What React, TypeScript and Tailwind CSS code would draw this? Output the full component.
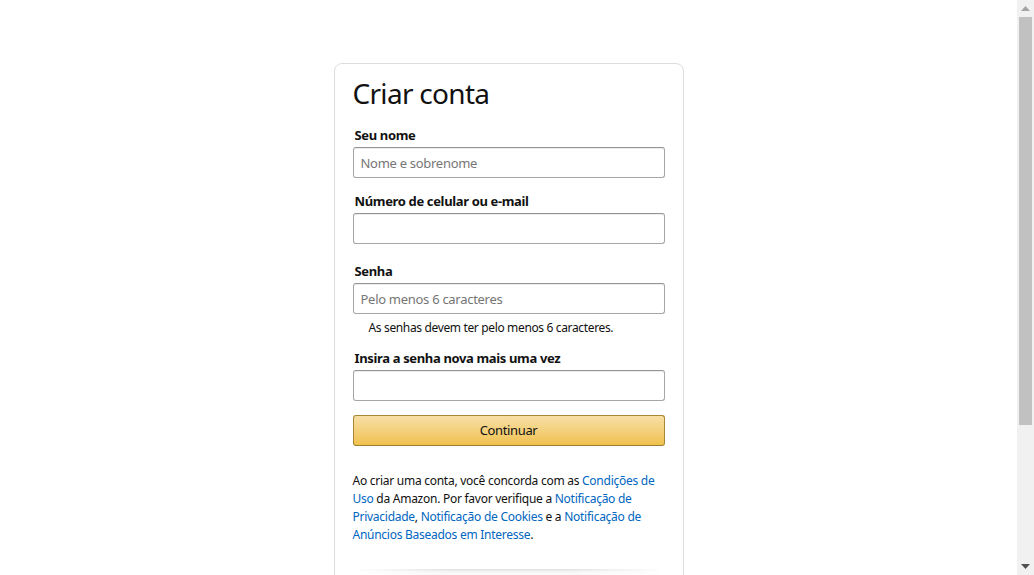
const font = "font-['Noto_Sans',_'Open_Sans',_sans-serif] tracking-[-0.022em]";

const Field = ({
  label,
  placeholder,
  className,
}: {
  label: string;
  placeholder?: string;
  className?: string;
}) => (
  <div className={className}>
    <label className="block pl-[2px] pb-[2px] text-[13px] leading-[19px] font-bold text-[#111]">
      {label}
    </label>
    <input
      type="text"
      placeholder={placeholder}
      className="block h-[31px] w-full rounded-[3px] border border-[#a6a6a6] border-t-[#949494] bg-white px-[7px] text-[13px] tracking-[-0.022em] text-[#111] shadow-[inset_0_1px_0_rgba(0,0,0,0.07)] outline-none placeholder:text-[#767676]"
    />
  </div>
);

const Scrollbar = () => (
  <div className="flex h-full w-[17px] shrink-0 flex-col items-center bg-[#f1f1f1]">
    <div className="flex h-[17px] w-full items-center justify-center">
      <svg width="9" height="5" viewBox="0 0 9 5">
        <path d="M0 5 L4.5 0 L9 5 Z" fill="#a3a3a3" />
      </svg>
    </div>
    <div className="h-[408px] w-[13px] bg-[#c1c1c1]" />
    <div className="flex-1" />
    <div className="flex h-[17px] w-full items-center justify-center">
      <svg width="9" height="5" viewBox="0 0 9 5">
        <path d="M0 0 L9 0 L4.5 5 Z" fill="#505050" />
      </svg>
    </div>
  </div>
);

export default function App() {
  return (
    <div className={`${font} flex h-screen overflow-hidden bg-white text-[#111]`}>
      <div className="min-w-0 flex-1 overflow-hidden">
        <div className="flex justify-center pt-[63px]">
          <div className="w-[350px] rounded-[8px] border border-[#ddd] px-[18px] pt-[12px] pb-[26px]">
            <h1 className="text-[28px] leading-[34px] font-normal tracking-[-0.025em] text-[#111]">
              Criar conta
            </h1>

            <Field className="mt-[16px]" label="Seu nome" placeholder="Nome e sobrenome" />
            <Field className="mt-[14px]" label="Número de celular ou e-mail" />
            <Field className="mt-[18px]" label="Senha" placeholder="Pelo menos 6 caracteres" />
            <div className="pl-[16px] pt-[5px] text-[12px] leading-[18px] text-[#111]">
              As senhas devem ter pelo menos 6 caracteres.
            </div>
            <Field className="mt-[12px]" label="Insira a senha nova mais uma vez" />

            <button className="mt-[14px] block h-[31px] w-full rounded-[3px] border border-[#a88734] border-b-[#9c7e31] bg-gradient-to-b from-[#f7dfa5] to-[#f0c14b] text-[13px] text-[#111]">
              Continuar
            </button>

            <p className="mt-[26px] text-[12px] leading-[18px] tracking-[-0.022em] text-[#111]">
              Ao criar uma conta, você concorda com as{" "}
              <a className="text-[#0066c0]" href="#">Condições de Uso</a> da Amazon. Por favor verifique a{" "}
              <a className="text-[#0066c0]" href="#">Notificação de Privacidade</a>,{" "}
              <a className="text-[#0066c0]" href="#">Notificação de Cookies</a> e a{" "}
              <a className="text-[#0066c0]" href="#">Notificação de Anúncios Baseados em Interesse</a>.
            </p>

            <div className="mt-[25px] h-[44px] bg-[linear-gradient(to_bottom,rgba(0,0,0,0.12),rgba(0,0,0,0.03)_3px,transparent_14px)] [mask-image:linear-gradient(to_right,transparent,black_30%,black_70%,transparent)]" />

            <div className="text-[13px] leading-[19px] text-[#111]">
              Comprando para seu trabalho?
              <div>
                <a className="text-[#0066c0]" href="#">Crie uma conta empresarial grátis</a>
              </div>
            </div>
            <div className="mt-[18px] text-[13px] leading-[19px] text-[#111]">
              Já tem uma conta? <a className="text-[#0066c0]" href="#">Fazer login ›</a>
            </div>
          </div>
        </div>
        <div className="mt-[26px] flex justify-center gap-[26px] text-[11px] text-[#0066c0]">
          <a href="#">Condições de Uso</a>
          <a href="#">Notificação de Privacidade</a>
          <a href="#">Ajuda</a>
        </div>
        <div className="mt-[8px] pb-[20px] text-center text-[11px] text-[#555]">
          © 1996-2024, Amazon.com, Inc. ou suas afiliadas
        </div>
      </div>
      <Scrollbar />
    </div>
  );
}
